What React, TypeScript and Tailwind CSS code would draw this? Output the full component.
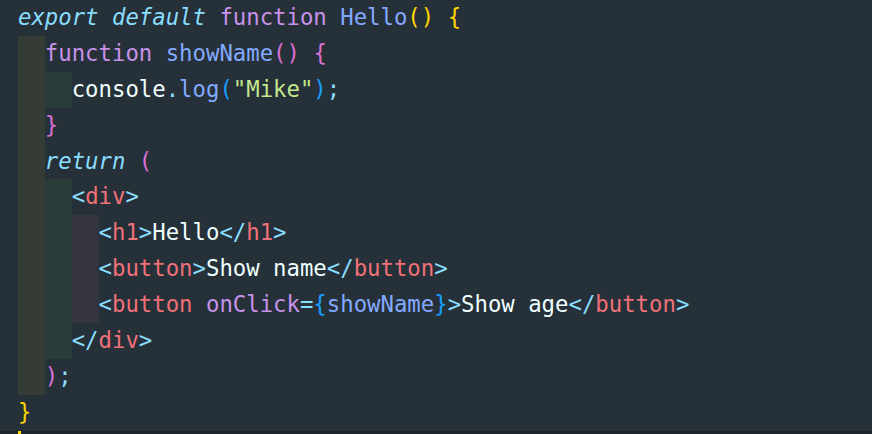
import React from "react";

type Tok = [string, string, boolean?];

const C = {
  kw: "#89ddff",
  fn: "#c792ea",
  name: "#82aaff",
  gold: "#ffd700",
  orchid: "#da70d6",
  blue: "#179fff",
  white: "#eeffff",
  str: "#c3e88d",
  tag: "#f07178",
  punc: "#89ddff",
};

const lines: { indent: number; toks: Tok[] }[] = [
  {
    indent: 0,
    toks: [
      ["export default", C.kw, true],
      [" ", C.white],
      ["function", C.fn],
      [" ", C.white],
      ["Hello", C.name],
      ["()", C.gold],
      [" ", C.white],
      ["{", C.gold],
    ],
  },
  {
    indent: 1,
    toks: [
      ["function", C.fn],
      [" ", C.white],
      ["showName", C.name],
      ["()", C.orchid],
      [" ", C.white],
      ["{", C.orchid],
    ],
  },
  {
    indent: 2,
    toks: [
      ["console", C.white],
      [".", C.punc],
      ["log", C.name],
      ["(", C.blue],
      ['"Mike"', C.str],
      [")", C.blue],
      [";", C.punc],
    ],
  },
  { indent: 1, toks: [["}", C.orchid]] },
  {
    indent: 1,
    toks: [
      ["return", C.kw, true],
      [" ", C.white],
      ["(", C.orchid],
    ],
  },
  {
    indent: 2,
    toks: [
      ["<", C.punc],
      ["div", C.tag],
      [">", C.punc],
    ],
  },
  {
    indent: 3,
    toks: [
      ["<", C.punc],
      ["h1", C.tag],
      [">", C.punc],
      ["Hello", C.white],
      ["</", C.punc],
      ["h1", C.tag],
      [">", C.punc],
    ],
  },
  {
    indent: 3,
    toks: [
      ["<", C.punc],
      ["button", C.tag],
      [">", C.punc],
      ["Show name", C.white],
      ["</", C.punc],
      ["button", C.tag],
      [">", C.punc],
    ],
  },
  {
    indent: 3,
    toks: [
      ["<", C.punc],
      ["button", C.tag],
      [" ", C.white],
      ["onClick", C.fn],
      ["=", C.punc],
      ["{", C.blue],
      ["showName", C.name],
      ["}", C.blue],
      [">", C.punc],
      ["Show age", C.white],
      ["</", C.punc],
      ["button", C.tag],
      [">", C.punc],
    ],
  },
  {
    indent: 2,
    toks: [
      ["</", C.punc],
      ["div", C.tag],
      [">", C.punc],
    ],
  },
  {
    indent: 1,
    toks: [
      [")", C.orchid],
      [";", C.punc],
    ],
  },
  { indent: 0, toks: [["}", C.gold]] },
];

const guideBg = ["bg-[#343c35]", "bg-[#2a3c3a]", "bg-[#34343f]"];

export default function App() {
  return (
    <div className="w-[872px] h-[434px] bg-[#263038] overflow-hidden flex flex-col">
      <div
        className="pl-[18px] text-[22.3px] leading-[35.9px] whitespace-pre"
        style={{ fontFamily: '"DejaVu Sans Mono", "Liberation Mono", monospace' }}
      >
        {lines.map((l, i) => (
          <div key={i} className="flex h-[35.9px]">
            {Array.from({ length: l.indent }).map((_, g) => (
              <span key={g} className={`w-[2ch] shrink-0 h-full ${guideBg[g]}`} />
            ))}
            <span>
              {l.toks.map(([t, c, it], j) => (
                <span key={j} style={{ color: c }} className={it ? "italic" : ""}>
                  {t}
                </span>
              ))}
            </span>
          </div>
        ))}
      </div>
      <div className="flex-1 bg-[#1e262c] pl-[18px]">
        <div className="w-[3px] h-[3px] bg-[#ffd700]" />
      </div>
    </div>
  );
}
